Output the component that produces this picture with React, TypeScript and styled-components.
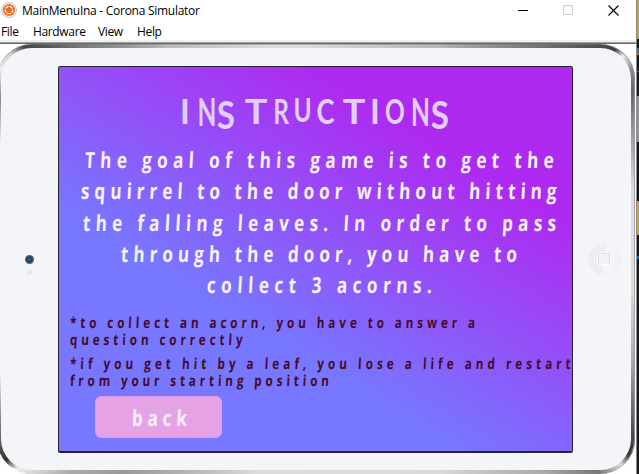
import React, { useLayoutEffect, useRef, useState } from 'react';
import styled, { createGlobalStyle } from 'styled-components';

const GlobalStyle = createGlobalStyle`
  * { box-sizing: border-box; }
  body { margin: 0; background: #fff; overflow: hidden; }
`;

const Desktop = styled.div`
  display: flex;
  width: 639px;
  height: 474px;
  overflow: hidden;
  background: #fff;
`;

const DesktopEdge = styled.div`
  width: 3px;
  flex: none;
  border-left: 1px solid #8a8a8a;
  background: linear-gradient(180deg,
    #b7a15c 0 39px, #10161e 39px 48px, #2c75a8 48px 52px, #bd5b2c 52px 55px,
    #0d1724 55px 71px, #6b583c 71px 72px, #111a26 72px 96px, #8d94a5 96px 142px,
    #101722 142px 201px, #c3a64f 201px 235px, #111820 235px 256px,
    #176bb0 256px 259px, #171b1e 259px 100%);
`;

const Window = styled.div`
  display: flex;
  flex-direction: column;
  width: 636px;
  flex: none;
  font-family: "Open Sans", "Noto Sans", sans-serif;
  font-size: 12px;
  color: #000;
`;

const TitleBar = styled.header`
  display: flex;
  align-items: center;
  height: 20px;
  padding-left: 1px;
`;

const WindowTitle = styled.div`
  flex: 1;
  margin-left: 5px;
  letter-spacing: -0.27px;
  white-space: nowrap;
`;

const WindowControls = styled.div`
  display: flex;
  gap: 35px;
  margin-right: 17px;
`;

const MenuBar = styled.nav`
  display: flex;
  height: 20px;
  padding-left: 1px;
  line-height: 24px;
  letter-spacing: -0.35px;
`;

const MenuItem = styled.span<{ $width: number }>`
  width: ${(p) => p.$width}px;
  white-space: nowrap;
`;

const Divider = styled.div`
  height: 4px;
  flex: none;
  background: linear-gradient(180deg, #f0f0f0 0 2px, #a0a0a0 2px 3px, #696969 3px 4px);
`;

const Bezel = styled.div`
  width: 638px;
  height: 430px;
  flex: none;
  margin-left: -3px;
  padding: 4px;
  border-radius: 35px;
  background: conic-gradient(from 0deg at 50% 50%,
    #d9dbda 0deg, #b5b7b5 30deg, #777 46deg, #555 52deg, #3c3c3c 55deg,
    #eee 56.5deg, #888 59deg, #666 62deg, #999 68deg, #dcdedc 78deg, #dcdedc 95deg,
    #aaa 108deg, #555 118deg, #333 122deg, #ddd 124deg, #777 127deg, #aaa 133deg,
    #d9dbda 150deg, #ddd 195deg, #999 222deg, #aaa 229deg, #eee 235deg, #333 237deg,
    #888 243deg, #f4f5f8 250deg, #f4f5f8 290deg, #888 297deg, #eee 301deg,
    #ccc 304deg, #444 306deg, #777 312deg, #bbb 325deg, #d9dbda 345deg, #d9dbda 360deg);
  box-shadow: inset -1px 0 0 #999c, inset 0 1px 0 #7777;
`;

const Face = styled.div`
  display: grid;
  grid-template-columns: 57px 515px 1fr;
  height: 100%;
  padding-top: 18px;
  border-radius: 31px;
  background: #f4f5f8;
`;

const CameraSide = styled.div`
  display: flex;
  flex-direction: column;
  align-items: center;
  gap: 6px;
  padding: 189px 1px 0 0;
`;

const Camera = styled.div`
  width: 9px;
  height: 9px;
  border-radius: 50%;
  background: radial-gradient(circle, #1267ba 0 1px, #20344b 2.5px, #555 3.5px, #606368 4.5px);
`;

const Sensor = styled.div`
  width: 5px;
  height: 5px;
  border-radius: 50%;
  background: #e6e8eb;
`;

const HomeSide = styled.div`
  padding: 177px 0 0 15px;
`;

const HomeButton = styled.div`
  display: grid;
  place-items: center;
  width: 33px;
  height: 33px;
  border: 1px solid #eeeff1;
  border-radius: 50%;
  background: linear-gradient(100deg, #edeef1 0 50%, #f5f6f8 51%, #f1f2f4 100%);
`;

const HomeGlyph = styled.div`
  width: 12px;
  height: 12px;
  border: 1px solid #dcdde0;
  border-bottom-color: #fff;
  border-radius: 3px;
  margin: 0 2px 1px 0;
  background: #f1f2f4;
  box-shadow: 0 0 0 1px #fafafa;
`;

const Screen = styled.main`
  height: 387px;
  border: 1px solid #28242f;
  border-bottom-width: 2px;
  border-radius: 2px;
  background: linear-gradient(31deg, #7777ff 35%, #ae2af0 77%);
  font-family: "Open Sans", "Noto Sans", sans-serif;
`;

const Heading = styled.h1`
  display: flex;
  margin: 23px 0 0 123px;
  height: 40px;
  line-height: 40px;
  font-family: Lato, sans-serif;
  font-size: 35px;
  font-weight: 700;
  color: #e0cff8;
`;

const Letter = styled.span<{ $ink: number; $gap: number; $sx: number; $sy: number; $drop: number }>`
  display: flex;
  justify-content: center;
  flex: none;
  width: ${(p) => p.$ink}px;
  margin-right: ${(p) => p.$gap}px;
  transform: translateY(${(p) => p.$drop}px) scale(${(p) => p.$sx}, ${(p) => p.$sy});
`;

const Goal = styled.div`
  height: 157px;
  margin-top: 14px;
  line-height: 31.3px;
  font-size: 22px;
  font-weight: 700;
  color: #f6f1fc;
`;

const Note = styled.div<{ $top: number }>`
  margin: ${(p) => p.$top}px 0 0 11px;
  line-height: 16.5px;
  font-size: 15px;
  font-weight: 700;
  color: #460b2b;
`;

const BackButton = styled.button`
  display: block;
  width: 127px;
  height: 42px;
  margin: 8px 0 0 36px;
  padding: 0 0 0 36px;
  border: 1px solid #dc9be9;
  border-radius: 6px;
  background: #e5a3e6;
  color: #f9effb;
  font: 700 22px/38px "Open Sans", "Noto Sans", sans-serif;
  text-align: left;
`;

const Line = styled.div<{ $indent: number; $squeeze: number }>`
  width: max-content;
  margin-left: ${(p) => p.$indent}px;
  white-space: pre;
  transform: scaleX(${(p) => p.$squeeze}) skewX(-4deg);
  transform-origin: 0 50%;
`;

type TrackedLineProps = { text: string; width: number; indent?: number; squeeze?: number };

/* Spreads the letters of one line so that it fills the given width. */
function TrackedLine({ text, width, indent = 0, squeeze = 0.78 }: TrackedLineProps) {
  const ref = useRef<HTMLDivElement>(null);
  const [spacing, setSpacing] = useState(0);
  useLayoutEffect(() => {
    const natural = ref.current!.offsetWidth - spacing * text.length;
    setSpacing((width / squeeze - natural) / (text.length - 1));
  }, [text, width, squeeze]);
  return (
    <Line ref={ref} $indent={indent} $squeeze={squeeze} style={{ letterSpacing: spacing }}>
      {text}
    </Line>
  );
}

type Glyph = { char: string; ink: number; gap: number; sx: number; sy?: number; drop?: number };

const heading: Glyph[] = [
  { char: 'I', ink: 6, gap: 11, sx: 0.95 },
  { char: 'N', ink: 16, gap: 1, sx: 0.7, sy: 1.08, drop: 1 },
  { char: 'S', ink: 20, gap: 9, sx: 0.95, sy: 1.1, drop: 4 },
  { char: 'T', ink: 22, gap: 7, sx: 1.08 },
  { char: 'R', ink: 14, gap: 7, sx: 0.7 },
  { char: 'U', ink: 15, gap: 7, sx: 0.7, sy: 0.92, drop: -1 },
  { char: 'C', ink: 17, gap: 9, sx: 0.78 },
  { char: 'T', ink: 22, gap: 7, sx: 1.08 },
  { char: 'I', ink: 6, gap: 8, sx: 0.95 },
  { char: 'O', ink: 18, gap: 8, sx: 0.7 },
  { char: 'N', ink: 17, gap: 1, sx: 0.7, sy: 1.08, drop: 1 },
  { char: 'S', ink: 20, gap: 0, sx: 0.95, sy: 1.1, drop: 4 },
];

const goalLines = [
  { text: 'The goal of this game is to get the', indent: 26, width: 469 },
  { text: 'squirrel to the door without hitting', indent: 22, width: 476 },
  { text: 'the falling leaves. In order to pass', indent: 24, width: 473 },
  { text: 'through the door, you have to', indent: 62, width: 396 },
  { text: 'collect 3 acorns.', indent: 148, width: 225 },
];

const menu = [
  { label: 'File', width: 32 },
  { label: 'Hardware', width: 65 },
  { label: 'View', width: 39 },
  { label: 'Help', width: 40 },
];

function CoronaIcon() {
  return (
    <svg width="16" height="20" viewBox="0 0 16 20">
      <circle cx="8" cy="10" r="7.4" fill="#fff" stroke="#b9bcc0" />
      <circle cx="8" cy="10" r="5.2" fill="#fff" stroke="#f36b21" strokeWidth="1.8" />
      <path d="M8 6.4l3.5 2.6-1.3 4.1H5.8L4.5 9z" fill="#f36b21" />
      <path d="M8 4v3M2.5 8.4l2.6.8M13.5 8.4l-2.6.8M4.4 14.7L6 12.6M11.6 14.7L10 12.6" stroke="#f36b21" />
    </svg>
  );
}

export default function App() {
  return (
    <Desktop>
      <GlobalStyle />
      <Window>
        <TitleBar>
          <CoronaIcon />
          <WindowTitle>MainMenuIna - Corona Simulator</WindowTitle>
          <WindowControls>
            <svg width="10" height="11" viewBox="0 0 10 11"><path d="M0 5.5h10" stroke="#000" /></svg>
            <svg width="10" height="11" viewBox="0 0 10 11"><path d="M.5 .5h9v9h-9z" fill="none" stroke="#ccc" /></svg>
            <svg width="11" height="11" viewBox="0 0 11 11"><path d="M.5 .5l10 10M10.5 .5l-10 10" stroke="#000" strokeWidth="1.1" /></svg>
          </WindowControls>
        </TitleBar>
        <MenuBar>
          {menu.map((m) => <MenuItem key={m.label} $width={m.width}>{m.label}</MenuItem>)}
        </MenuBar>
        <Divider />
        <Bezel>
          <Face>
            <CameraSide><Camera /><Sensor /></CameraSide>
            <Screen>
              <Heading>
                {heading.map((g, i) => (
                  <Letter key={i} $ink={g.ink} $gap={g.gap} $sx={g.sx} $sy={g.sy ?? 1} $drop={g.drop ?? 0}>
                    {g.char}
                  </Letter>
                ))}
              </Heading>
              <Goal>
                {goalLines.map((l) => <TrackedLine key={l.text} {...l} />)}
              </Goal>
              <Note $top={13}>
                <TrackedLine text="*to collect an acorn, you have to answer a" width={405} />
                <TrackedLine text="question correctly" width={173} />
              </Note>
              <Note $top={8}>
                <TrackedLine text="*if you get hit by a leaf, you lose a life and restart" width={501} />
                <TrackedLine text="from your starting position" width={259} />
              </Note>
              <BackButton><TrackedLine text="back" width={55} /></BackButton>
            </Screen>
            <HomeSide><HomeButton><HomeGlyph /></HomeButton></HomeSide>
          </Face>
        </Bezel>
      </Window>
      <DesktopEdge />
    </Desktop>
  );
}
